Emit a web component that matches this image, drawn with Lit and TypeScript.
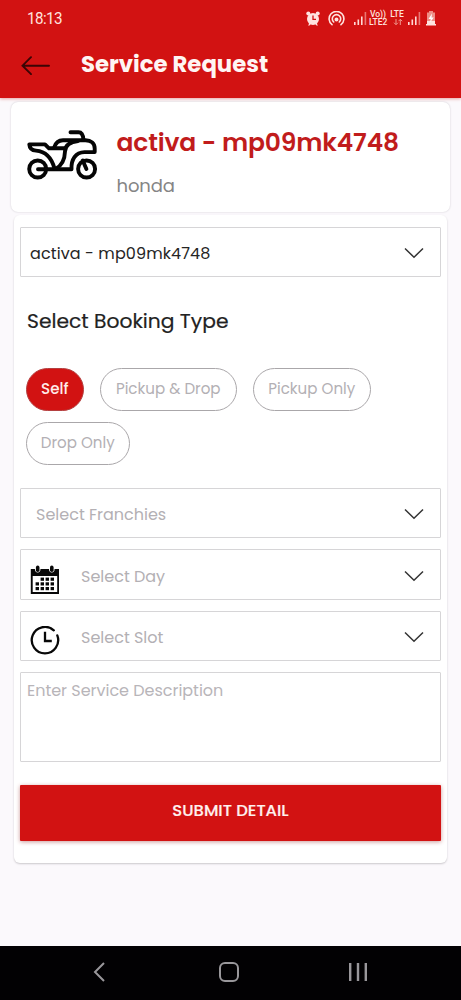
import { LitElement, html, css, svg } from "lit";
import { customElement, property } from "lit/decorators.js";

const chevron = html`<svg class="chev" width="20" height="12" viewBox="0 0 20 12" fill="none" stroke="#333" stroke-width="1.5"><path d="M1 1.5 10 10.2 19 1.5" /></svg>`;

const signal = html`<svg width="13" height="13" viewBox="0 0 13 13" fill="#ffd9d5"><path d="M0 10h1.6v3H0zM3.5 7.5h1.6V13H3.5zM7 4.5h1.6V13H7z" /><path opacity=".5" d="M10.6 0h1.6v13h-1.6z" /></svg>`;

const motorcycle = html`<svg width="80" height="60" viewBox="0 0 80 60" fill="none" stroke="#050505" stroke-width="3.9" stroke-linejoin="round" stroke-linecap="round">
  <circle cx="15.7" cy="44" r="8.5" /><circle cx="64.6" cy="44" r="8.5" />
  <path d="M16 44.2H49.5C49 34.5 53.5 27.3 62.5 27.1H72.7V23.5C72.7 18.5 69 15.3 63.5 15.3H41C36 15.3 33.5 18 32 22.8" />
  <path d="M43 23.3H27L23 19.4H7.3C7.6 23.6 9.5 25.4 14 25.6C24 26.5 30 34 32.5 43.5" />
  <path d="M56 16C47 17 43.2 20.5 43 26.5C42.8 34 40 40.5 33.5 44" />
  <path d="M48.5 7.2H56.5C59.8 7.2 61.2 10 61.4 15" />
  <path d="M64.4 44 60.7 35.5" />
</svg>`;

const calendar = html`<svg width="30" height="30" viewBox="0 0 30 30">
  <path d="M.8 4H29V29H.8Z" fill="#080808" /><path d="M2.7 11H27.2V27H2.7Z" fill="#fff" />
  <ellipse cx="7.7" cy="3.8" rx="2.8" ry="3.8" fill="#fff" /><ellipse cx="21.8" cy="3.8" rx="2.8" ry="3.8" fill="#fff" />
  <rect x="5.9" y=".6" width="3.6" height="6.4" rx="1.8" fill="#080808" /><rect x="20" y=".6" width="3.6" height="6.4" rx="1.8" fill="#080808" />
  ${[0, 1, 2].map((r) => [0, 1, 2, 3].map((c) => (r === 0 && c === 0 ? null : svg`<rect x=${5.6 + c * 5} y=${12.6 + r * 4.7} width="3.4" height="3.2" fill="#080808" />`)))}
</svg>`;

const clock = html`<svg width="30" height="30" viewBox="0 0 30 30" fill="none" stroke="#080808" stroke-width="2.3">
  <path d="M23.8 4.3A13.2 13.2 0 1 0 27.3 9.4" stroke-linecap="round" /><path d="M15 5.7V15H21.8" />
</svg>`;

@customElement("select-field")
class SelectField extends LitElement {
  @property() kind = "";
  @property() label = "";
  static styles = css`
    :host { display: block; }
    .box { box-sizing: border-box; height: 50.5px; border: 1px solid #d6d5d7; border-radius: 1px; display: flex; align-items: center; padding: 0 16px 0 15px; background: #fff; color: #b3b0b4; font-size: 16px; white-space: nowrap; }
    .value { color: #252525; padding-left: 9px; letter-spacing: .1px; }
    .text { flex: 1; padding-top: 4px; }
    .chev { margin-top: 2.5px; }
    .icon { display: flex; width: 51px; flex: none; margin-left: -6px; padding-top: 11px; }
  `;
  render() {
    const icon = this.kind === "day" ? calendar : this.kind === "slot" ? clock : null;
    return html`<div class="box ${this.kind === "value" ? "value" : ""}">
      ${icon ? html`<span class="icon">${icon}</span>` : null}
      <span class="text">${this.label}</span>${chevron}
    </div>`;
  }
}

@customElement("app-root")
class AppRoot extends LitElement {
  static styles = css`
    :host { display: flex; flex-direction: column; height: 1000px; background: #fbf9fc; font-family: Poppins, Inter, sans-serif; overflow: hidden; }
    * { box-sizing: border-box; }
    .top { background: #d21212; height: 98px; flex: none; box-shadow: 0 1px 3px #e7a3a3; }
    .status { height: 36px; display: flex; align-items: center; padding: 0 25px 0 27px; color: #ffe3df; font-family: Roboto, sans-serif; }
    .time { font-size: 16.5px; letter-spacing: -.6px; flex: 1; transform: scaleX(.92); transform-origin: left; }
    .icons { display: flex; align-items: center; }
    .icons svg { display: block; }
    .i1 { margin-right: 8px; } .i2 { margin-right: 9px; } .i3 { margin-right: 2px; } .i4 { margin-right: 4px; } .i5 { margin-right: 5px; }
    .lte { font-size: 8.5px; line-height: 8px; font-weight: 500; display: flex; gap: 3px; width: 35px; white-space: nowrap; }
    .lte span { display: block; }
    .c1 { width: 18px; text-align: center; } .c2 { width: 14px; text-align: center; }
    .c2 svg { margin-left: 3px; }
    .title { display: flex; align-items: center; height: 58px; padding-left: 21px; gap: 31px; color: #fff5f3; font-weight: 700; font-size: 22.8px; }
    .title span { padding-bottom: 2px; }
    .vehicle { height: 110px; margin: 4px 11px 0 11px; flex: none; background: #fff; border-radius: 7px; box-shadow: 0 0 2px #ccc8ce; display: flex; padding: 23px 11px 0; }
    .info { padding: 1px 0 0 14.5px; white-space: nowrap; }
    .name { color: #c11c1c; font-size: 25px; font-weight: 600; line-height: 34px; letter-spacing: -.17px; }
    .brand { color: #858585; font-size: 18px; line-height: 24px; padding-top: 14px; height: 38px; letter-spacing: -.1px; }
    .form { margin: 3px 14px 0; height: 648px; flex: none; background: #fff; border-radius: 6px; box-shadow: 0 1px 2px #cbc8cc; padding: 11.5px 6px 0; display: flex; flex-direction: column; }
    h2 { margin: 29px 0 0 7px; font-size: 20.25px; line-height: 30px; font-weight: 400; color: #222; -webkit-text-stroke: .2px #222; }
    .pills { display: flex; flex-wrap: wrap; gap: 11px 16px; margin: 32px 5.5px 22.5px; width: 370px; }
    .pill { height: 43px; border: 1px solid #aaa7aa; border-radius: 22px; display: flex; align-items: center; justify-content: center; padding-bottom: 2.5px; color: #b3b0b4; font-size: 15.1px; white-space: nowrap; }
    .on { background: #d21212; color: #ffecea; border-color: #b44040; font-weight: 500; }
    .w1 { width: 58.5px; } .w2 { width: 136.5px; } .w3 { width: 118.5px; } .w4 { width: 104.5px; }
    .fields { display: flex; flex-direction: column; gap: 11px; }
    .area { height: 89.5px; border: 1px solid #d6d5d7; border-radius: 1px; padding: 7.5px 6px; color: #b8b5b9; font-size: 16px; letter-spacing: -.02px; line-height: 20px; }
    .submit { height: 56px; margin-top: 23px; background: #d21212; border-radius: 1px; box-shadow: 0 1px 4px #c99; color: #fff0ee; font-weight: 500; font-size: 16.4px; display: flex; align-items: center; justify-content: center; padding-bottom: 4px; -webkit-text-stroke: .2px #fff0ee; }
    .gap { flex: 1; }
    .nav { height: 54px; background: #020103; flex: none; display: grid; grid-template-columns: 198px 61px 198px; align-items: center; justify-items: center; padding-bottom: 2px; }
  `;
  render() {
    return html`
      <header class="top">
        <div class="status">
          <span class="time">18:13</span>
          <div class="icons">
            <svg class="i1" width="14" height="15" viewBox="0 0 14 15"><g fill="#ffe3df"><circle cx="7" cy="8" r="6" /><circle cx="2.3" cy="2.6" r="2" /><circle cx="11.7" cy="2.6" r="2" /><path d="M2 14.5 4 11.5 10 11.5 12 14.5 10.5 14.5 9 12.8 5 12.8 3.5 14.5Z" /></g><path d="M7 4.5V8.4H10" fill="none" stroke="#d21212" stroke-width="1.3" /></svg>
            <svg class="i2" width="17" height="15" viewBox="0 0 17 15" fill="none" stroke="#ffe3df" stroke-width="1.6" stroke-linecap="round"><path d="M4 13.7A7.4 7.4 0 1 1 13 13.7M5.7 11A4.2 4.2 0 1 1 11.3 11" /><circle cx="8.5" cy="8.5" r="1.2" fill="#ffe3df" /></svg>
            <span class="i3">${signal}</span>
            <span class="lte i4"><span class="c1">Vo))<br />LTE2</span><span class="c2">LTE<svg width="10" height="8" viewBox="0 0 10 8" fill="none" stroke="#f09a90" stroke-width="1"><path d="M3 1V6.5M1 4.7 3 6.7 5 4.7M7.3 7V1.5M5.5 3.2 7.3 1.3 9.2 3.2" /></svg></span></span>
            <span class="i5">${signal}</span>
            <svg width="10" height="15" viewBox="0 0 10 15"><path d="M3 0H7V1.5H9V10H1V1.5H3Z" fill="#ee8f87" /><path d="M1 10H9V13H10V14.5H0V13H1Z" fill="#ffe3df" /><path d="M6 2.5 2.5 8H4.7L4 11.5 7.8 6.5H5.5Z" fill="#fff" /></svg>
          </div>
        </div>
        <div class="title">
          <svg width="29" height="20" viewBox="0 0 29 20" fill="none" stroke="#3b0505" stroke-width="1.9" stroke-linecap="round"><path d="M28 10.7H1.5M10 2.2 1.5 10.7 10 19.2" /></svg>
          <span>Service Request</span>
        </div>
      </header>
      <section class="vehicle">
        ${motorcycle}
        <div class="info"><div class="name">activa - mp09mk4748</div><div class="brand">honda</div></div>
      </section>
      <section class="form">
        <select-field kind="value" label="activa - mp09mk4748"></select-field>
        <h2>Select Booking Type</h2>
        <div class="pills">
          <span class="pill on w1">Self</span><span class="pill w2">Pickup &amp; Drop</span><span class="pill w3">Pickup Only</span><span class="pill w4">Drop Only</span>
        </div>
        <div class="fields">
          <select-field label="Select Franchies"></select-field>
          <select-field kind="day" label="Select Day"></select-field>
          <select-field kind="slot" label="Select Slot"></select-field>
          <div class="area">Enter Service Description</div>
        </div>
        <div class="submit">SUBMIT DETAIL</div>
      </section>
      <div class="gap"></div>
      <nav class="nav">
        <svg width="12" height="20" viewBox="0 0 12 20" fill="none" stroke="#99979b" stroke-width="2"><path d="M11 1 2 10 11 19" /></svg>
        <svg width="20" height="20" viewBox="0 0 20 20" fill="none" stroke="#99979b" stroke-width="2"><rect x="1" y="1" width="18" height="18" rx="5" /></svg>
        <svg width="18" height="18" viewBox="0 0 18 18" fill="#99979b"><path d="M0 0h2.4v18H0zM7.8 0h2.4v18H7.8zM15.6 0h2.4v18h-2.4z" /></svg>
      </nav>`;
  }
}
